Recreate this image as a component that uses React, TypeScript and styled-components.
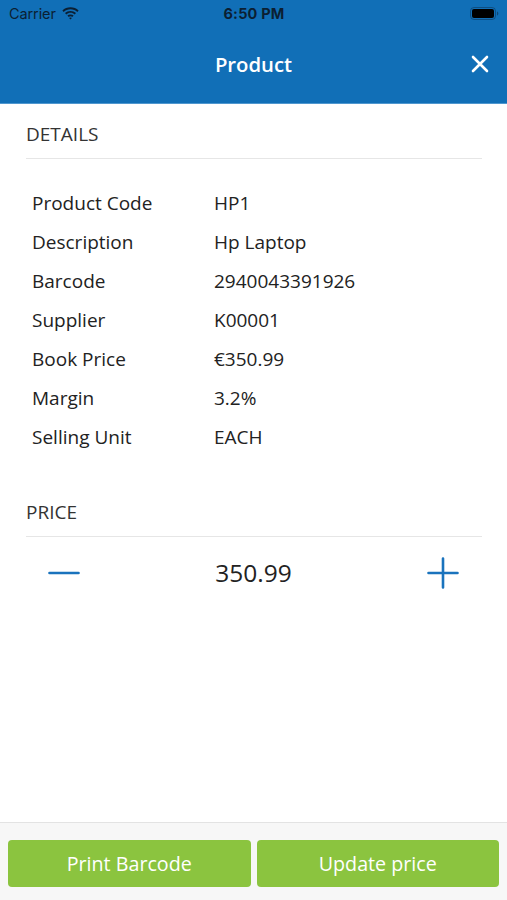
import React from "react";
import styled, { createGlobalStyle } from "styled-components";

const GlobalStyle = createGlobalStyle`
  html, body { margin: 0; padding: 0; background: #ffffff; }
  body { font-family: "Open Sans", "Noto Sans", sans-serif; }
  * { box-sizing: border-box; }
`;

const Screen = styled.div`
  width: 507px;
  height: 900px;
  display: flex;
  flex-direction: column;
  background: #ffffff;
  overflow: hidden;
`;

const Header = styled.header`
  background: #116fb7;
  border-bottom: 1px solid #4f97cf;
  height: 104px;
  display: flex;
  flex-direction: column;
`;

const StatusBar = styled.div`
  height: 27px;
  display: grid;
  grid-template-columns: 1fr auto 1fr;
  align-items: center;
  padding: 0 8px 0 9px;
  font-family: "Inter", "Roboto", sans-serif;
  font-size: 14.5px;
  color: #0b1f33;
`;

const Carrier = styled.div`
  display: flex;
  align-items: center;
  gap: 6px;
  letter-spacing: -0.1px;
`;

const Clock = styled.div`
  font-weight: 700;
  letter-spacing: 0.2px;
`;

const BatteryWrap = styled.div`
  display: flex;
  justify-content: flex-end;
  align-items: center;
`;

const NavBar = styled.div`
  flex: 1;
  display: grid;
  grid-template-columns: 60px 1fr 60px;
  align-items: center;
  padding-bottom: 2px;
`;

const Title = styled.h1`
  margin: 0;
  text-align: center;
  color: #ffffff;
  font-size: 20.3px;
  font-weight: 600;
`;

const CloseButton = styled.button`
  justify-self: end;
  margin-right: 17px;
  border: none;
  background: transparent;
  padding: 0;
  width: 20px;
  height: 20px;
  display: flex;
  align-items: center;
  justify-content: center;
`;

const Content = styled.main`
  flex: 1;
  padding: 0 25px 0 26px;
`;

const Section = styled.section<{ $gapTop?: number }>`
  margin-top: ${(p) => p.$gapTop ?? 0}px;
`;

const SectionTitle = styled.h2`
  margin: 0;
  padding: 18px 0 12px;
  line-height: 24px;
  font-size: 19px;
  font-weight: 400;
  color: #333333;
  border-bottom: 1px solid #e6e6e6;
`;

const DetailList = styled.dl`
  margin: 24px 0 0;
  padding-left: 6px;
`;

const DetailRow = styled.div`
  height: 39px;
  display: grid;
  grid-template-columns: 182px 1fr;
  align-items: center;
  font-size: 19px;
  color: #222222;
`;

const Label = styled.dt`
  margin: 0;
`;

const Value = styled.dd`
  margin: 0;
`;

const Stepper = styled.div`
  height: 72px;
  display: grid;
  grid-template-columns: 76px 1fr 76px;
  align-items: center;
`;

const StepButton = styled.button<{ $align: "start" | "end" }>`
  justify-self: ${(p) => p.$align};
  border: none;
  background: transparent;
  padding: 0;
  margin: ${(p) => (p.$align === "start" ? "0 0 0 22px" : "0 23px 0 0")};
  width: 32px;
  height: 32px;
  display: flex;
  align-items: center;
  justify-content: center;
`;

const PriceValue = styled.div`
  text-align: center;
  font-size: 24.5px;
  color: #222222;
  padding-right: 1px;
  margin-top: -2px;
`;

const Footer = styled.footer`
  height: 78px;
  border-top: 1px solid #e3e3e3;
  background: #f7f7f7;
  display: grid;
  grid-template-columns: 1fr 1fr;
  gap: 6px;
  padding: 17px 8px 13px;
`;

const ActionButton = styled.button`
  border: none;
  border-radius: 4px;
  background: #8bc43f;
  color: #ffffff;
  font-family: "Open Sans", sans-serif;
  font-size: 19.7px;
  font-weight: 400;
  display: flex;
  align-items: center;
  justify-content: center;
`;

const details: [string, string][] = [
  ["Product Code", "HP1"],
  ["Description", "Hp Laptop"],
  ["Barcode", "2940043391926"],
  ["Supplier", "K00001"],
  ["Book Price", "€350.99"],
  ["Margin", "3.2%"],
  ["Selling Unit", "EACH"],
];

const Wifi = () => (
  <svg width="17" height="13" viewBox="0 0 17 13">
    <path d="M8.5 2.2c2.6 0 5 1 6.8 2.7l1.3-1.4C14.5 1.5 11.6.3 8.5.3S2.5 1.5.4 3.5l1.3 1.4C3.5 3.2 5.9 2.2 8.5 2.2z" fill="#0b1f33" />
    <path d="M8.5 5.8c1.6 0 3 .6 4.2 1.6l1.3-1.4C12.5 4.7 10.6 3.9 8.5 3.9S4.5 4.7 3 6l1.3 1.4c1.2-1 2.6-1.6 4.2-1.6z" fill="#0b1f33" />
    <path d="M8.5 9.3c.7 0 1.3.2 1.8.6l1.3-1.4C10.8 7.8 9.7 7.4 8.5 7.4S6.2 7.8 5.4 8.5l1.3 1.4c.5-.4 1.1-.6 1.8-.6z" fill="#0b1f33" />
    <path d="M8.5 12.6l1.4-1.5c-.4-.3-.9-.5-1.4-.5s-1 .2-1.4.5z" fill="#0b1f33" />
  </svg>
);

const Battery = () => (
  <svg width="29" height="13" viewBox="0 0 29 13">
    <rect x="0.5" y="0.5" width="25" height="12" rx="3.5" fill="none" stroke="#0b1f33" strokeOpacity="0.4" />
    <rect x="2" y="2" width="22" height="9" rx="2" fill="#000" />
    <path d="M27 4.5v4c.8-.3 1.3-1.1 1.3-2s-.5-1.7-1.3-2z" fill="#0b1f33" fillOpacity="0.5" />
  </svg>
);

export default function App() {
  return (
    <>
      <GlobalStyle />
      <Screen>
        <Header>
          <StatusBar>
            <Carrier>
              Carrier
              <Wifi />
            </Carrier>
            <Clock>6:50 PM</Clock>
            <BatteryWrap>
              <Battery />
            </BatteryWrap>
          </StatusBar>
          <NavBar>
            <span />
            <Title>Product</Title>
            <CloseButton aria-label="Close">
              <svg width="18" height="18" viewBox="0 0 18 18">
                <path d="M2 2L16 16M16 2L2 16" stroke="#ffffff" strokeWidth="2.6" strokeLinecap="round" />
              </svg>
            </CloseButton>
          </NavBar>
        </Header>
        <Content>
          <Section>
            <SectionTitle>DETAILS</SectionTitle>
            <DetailList>
              {details.map(([k, v]) => (
                <DetailRow key={k}>
                  <Label>{k}</Label>
                  <Value>{v}</Value>
                </DetailRow>
              ))}
            </DetailList>
          </Section>
          <Section $gapTop={26}>
            <SectionTitle>PRICE</SectionTitle>
            <Stepper>
              <StepButton $align="start" aria-label="Decrease">
                <svg width="32" height="32" viewBox="0 0 32 32">
                  <path d="M1.5 16H30.5" stroke="#1a73bd" strokeWidth="2.6" strokeLinecap="round" />
                </svg>
              </StepButton>
              <PriceValue>350.99</PriceValue>
              <StepButton $align="end" aria-label="Increase">
                <svg width="32" height="32" viewBox="0 0 32 32">
                  <path d="M1.5 16H30.5M16 1.5V30.5" stroke="#1a73bd" strokeWidth="2.6" strokeLinecap="round" />
                </svg>
              </StepButton>
            </Stepper>
          </Section>
        </Content>
        <Footer>
          <ActionButton>Print Barcode</ActionButton>
          <ActionButton>Update price</ActionButton>
        </Footer>
      </Screen>
    </>
  );
}
